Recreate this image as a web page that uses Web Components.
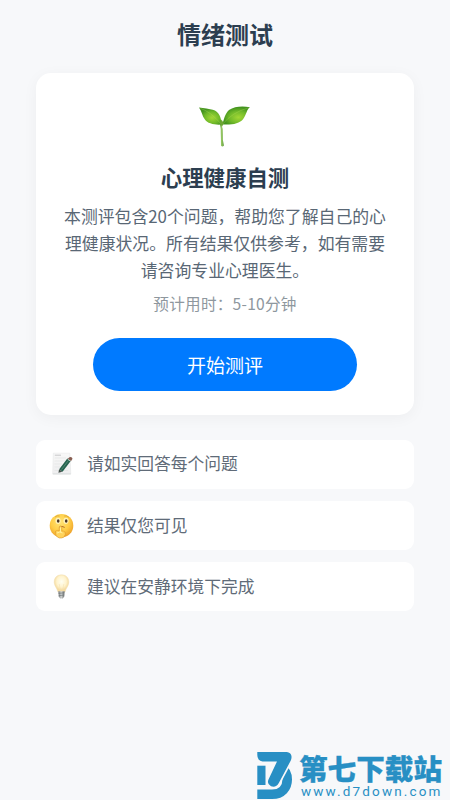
<!DOCTYPE html>
<html lang="zh-CN">
<head>
<meta charset="utf-8">
<title>情绪测试</title>
<style>
html,body{margin:0;height:100%;background:#f7f8fa}
body{font-family:"Noto Sans CJK SC",sans-serif;overflow:hidden}
</style>
</head>
<body>
<mood-page>
  <intro-card></intro-card>
  <tip-row><note-icon slot="icon"></note-icon>请如实回答每个问题</tip-row>
  <tip-row><hush-icon slot="icon"></hush-icon>结果仅您可见</tip-row>
  <tip-row><bulb-icon slot="icon"></bulb-icon>建议在安静环境下完成</tip-row>
</mood-page>
<site-mark></site-mark>
<script>
function define(name, html){
  const t=document.createElement('template');
  t.innerHTML=html;
  customElements.define(name,class extends HTMLElement{
    constructor(){super();this.attachShadow({mode:'open'}).append(t.content.cloneNode(true));}
  });
}
define('sprout-icon',`<style>:host{display:block;width:56px;height:46px}svg{display:block}</style>
<svg width="56" height="46" viewBox="0 0 56 46"><defs>
<radialGradient id="a" cx=".58" cy=".6" r=".55"><stop offset="0" stop-color="#a2d735"/><stop offset=".6" stop-color="#70b929"/><stop offset="1" stop-color="#44941f"/></radialGradient>
<linearGradient id="b" x1="0" x2="1"><stop stop-color="#4f9630"/><stop offset=".5" stop-color="#9acb64"/><stop offset="1" stop-color="#508e32"/></linearGradient></defs>
<path d="M24.3 22Q26 26 25.8 32Q25.4 38 26.9 43.5Q25.6 45.2 24 43.8Q24 37 23.8 31Q24 25 22.6 22Z" fill="url(#b)"/>
<path d="M2 5.4Q10 6.2 15.7 7.7C22 9.6 24.3 15 24.5 22.5C18 23.2 10.5 21.5 7.9 17.5C5 13.8 4.9 9 2 5.4Z" fill="url(#a)"/>
<path d="M53 5.2C45.5 3.8 37.5 4.2 32 8.1C27.8 11.7 27 18 25.3 22.4C34 23 42.6 22 46.2 17C49.6 12.5 49.7 7 53 5.2Z" fill="url(#a)"/>
<path d="M3.3 6.2Q14 10 23.8 21.7M51.3 5.8Q35 10.5 26 21.8" fill="none" stroke="#c2e665" stroke-width=".6" opacity=".45"/>
<path d="M22.8 21.3L24.6 17.6L26.7 21.3L25 24.8Z" fill="#6ca534"/></svg>`);
define('note-icon',`<style>:host{display:block}svg{display:block}</style>
<svg width="28" height="28" viewBox="0 0 28 28"><defs><linearGradient id="p" x2="0" y2="1"><stop stop-color="#f8f8f8"/><stop offset="1" stop-color="#eeeeef"/></linearGradient></defs>
<path d="M5.3 3.2H21.8L22.8 23.8H4.7Z" fill="url(#p)" stroke="#e3e4e5" stroke-width=".5"/><path d="M4.8 24H22.8" stroke="#cacccd" stroke-width=".6"/>
<path d="M6.8 5.2H13" stroke="#bbbdbe" stroke-width=".8"/><path d="M6.8 8H18M6.6 11H17M6.5 14H14M6.5 17H12M6.5 20.5H20" stroke="#e1e2e3" stroke-width=".6"/>
<path d="M12.9 20.6L21 9.7" stroke="#25624f" stroke-width="4.2"/><path d="M13.5 19.6L20.7 10.1" stroke="#629b82" stroke-width=".7"/>
<path d="M19.6 8.9L21.4 7.3Q24 6.5 24.5 8.7L23 11.2Z" fill="#885e52"/><path d="M19.5 9L23 11.5" stroke="#b6c7c0" stroke-width="1"/>
<path d="M11.1 19.2L10.4 22.8L14.4 21.8Z" fill="#47534d"/></svg>`);
define('hush-icon',`<style>:host{display:block}svg{display:block}</style>
<svg width="28" height="28" viewBox="0 0 28 28"><defs><radialGradient id="f" cx=".45" cy=".35" r=".65"><stop stop-color="#ffe477"/><stop offset=".6" stop-color="#ffcd46"/><stop offset="1" stop-color="#eda02a"/></radialGradient></defs>
<circle cx="13.5" cy="13.7" r="11.8" fill="url(#f)"/>
<ellipse cx="10" cy="8.8" rx="2.6" ry="3.1" fill="#fff3ba"/><ellipse cx="18" cy="8.8" rx="2.6" ry="3.1" fill="#fff3ba"/>
<ellipse cx="10.2" cy="9" rx="1.3" ry="1.8" fill="#493425"/><ellipse cx="18.2" cy="9" rx="1.3" ry="1.8" fill="#493425"/>
<path d="M7 5Q9 3.2 11.6 4M16.2 4Q19 3.3 21 5.3" fill="none" stroke="#c7922c" stroke-width=".6"/>
<path d="M11.2 15.4Q13.8 13.4 16.7 15.4" fill="none" stroke="#b36d2c" stroke-width="1"/>
<path d="M7.5 19.2Q9.5 17.7 11.2 19V15.7Q11.3 14 12.5 14Q13.7 14 13.8 15.7V19Q17.8 18.8 17.3 22.5Q16.2 26.4 11.5 26Q7 24.8 7.5 19.2Z" fill="#ffd25a" stroke="#dc972a" stroke-width=".6"/>
<path d="M12.5 15.5V20M9 21Q11.5 19 14.6 21" stroke="#fff0a0" stroke-width="1" fill="none"/></svg>`);
define('bulb-icon',`<style>:host{display:block}svg{display:block}</style>
<svg width="28" height="28" viewBox="0 0 28 28"><defs><radialGradient id="g" cy=".4"><stop stop-color="#fffef1"/><stop offset=".65" stop-color="#fff3cd"/><stop offset="1" stop-color="#f5dba0"/></radialGradient><linearGradient id="m"><stop stop-color="#707476"/><stop offset=".45" stop-color="#d2d5d4"/><stop offset="1" stop-color="#696c6c"/></linearGradient></defs>
<path d="M13.5 1.8C8.7 1.8 6.1 5.2 6.2 9.3C6.3 13.2 9.1 15 9.8 18.8H17.2C17.9 15 20.7 13.2 20.8 9.3C20.9 5.2 18.3 1.8 13.5 1.8Z" fill="url(#g)" stroke="#f1dfb5" stroke-width=".5"/>
<path d="M11.2 11L12.5 18M15.8 11L14.5 18" fill="none" stroke="#f2dfae" stroke-width=".5"/>
<path d="M10.4 18.2H16.6L16.2 23.5L14.8 25.4H12.2L10.8 23.5Z" fill="url(#m)"/><path d="M10.5 20.4L16.4 19.8M10.7 22.7L16.3 22" stroke="#62696b" stroke-width=".6"/></svg>`);
define('pill-button',`<style>:host{display:block}button{width:264px;height:53px;border:0;border-radius:27px;background:#007aff;color:#fff;font:400 19px/53px "Noto Sans CJK SC",sans-serif;padding:0;display:block}</style><button><slot></slot></button>`);
define('intro-card',`<style>
:host{box-sizing:border-box;width:378px;height:342px;border-radius:15px;background:#fff;box-shadow:0 3px 15px rgba(0,0,0,.045);display:flex;flex-direction:column;align-items:center;padding-top:28px}
sprout-icon{margin-top:.5px}
h2{margin:12px 0 0;font-size:21.4px;line-height:34px;font-weight:700;color:#2c3e50}
p{margin:8.5px 0 0;font-size:16.85px;line-height:27px;color:#596775;text-align:center}
p span{display:block;white-space:nowrap}
small{margin-top:9px;font-size:15.6px;line-height:22px;color:#8e979e;letter-spacing:.25px}
pill-button{margin-top:24px}
</style><sprout-icon></sprout-icon><h2>心理健康自测</h2>
<p><span>本测评包含20个问题，帮助您了解自己的心</span><span>理健康状况。所有结果仅供参考，如有需要</span><span>请咨询专业心理医生。</span></p>
<small>预计用时：5-10分钟</small><pill-button>开始测评</pill-button>`);
define('tip-row',`<style>:host{box-sizing:border-box;width:378px;height:49px;border-radius:9px;background:#fff;display:flex;align-items:center;gap:11px;padding:0 12px;font-size:16.75px;line-height:24px;color:#606b78}
div{padding-bottom:2px}</style><slot name="icon"></slot><div><slot></slot></div>`);
define('mood-page',`<style>:host{display:flex;flex-direction:column;align-items:center;padding-top:15.5px}
h1{margin:0 0 21.5px;font-size:24px;line-height:36px;font-weight:700;color:#2c3e50}
section{display:flex;flex-direction:column;gap:12.3px}
::slotted(intro-card){margin-bottom:12.5px}</style><h1>情绪测试</h1><section><slot></slot></section>`);
define('site-mark',`<style>:host{position:absolute;left:257px;top:751px;height:49px;display:flex;gap:7px;color:#288fc4}
svg{display:block}.w{width:145px}
.n{font-size:28.6px;line-height:30px;font-weight:900;white-space:nowrap;-webkit-text-stroke:.3px #288fc4;padding-top:2px;margin-left:-1px}
.u{font:400 13.5px/16px Roboto,sans-serif;letter-spacing:2.15px;white-space:nowrap;margin-left:1px}</style>
<svg width="36" height="49" viewBox="0 0 36 49">
<path d="M.3 14.7H8.5V34H.3Z" fill="#288fc4"/>
<path d="M.3 43.3H15C25 43.3 30.2 36.5 30.2 28.5C30.2 22.5 28 19 24 16.5" fill="none" stroke="#288fc4" stroke-width="9.6"/>
<path d="M.3 1H28C34.8 1 36 5.5 33 11L21.8 32Q19 37 14 35.3Q9.6 33 11.5 28.5L20 10.5H5.5Q.3 9.5 .3 4Z" fill="#288fc4" stroke="#f7f8fa" stroke-width="3.4" paint-order="stroke"/></svg>
<div class="w"><div class="n">第七下载站</div><div class="u">www.d7down.com</div></div>`);
</script>
</body>
</html>
